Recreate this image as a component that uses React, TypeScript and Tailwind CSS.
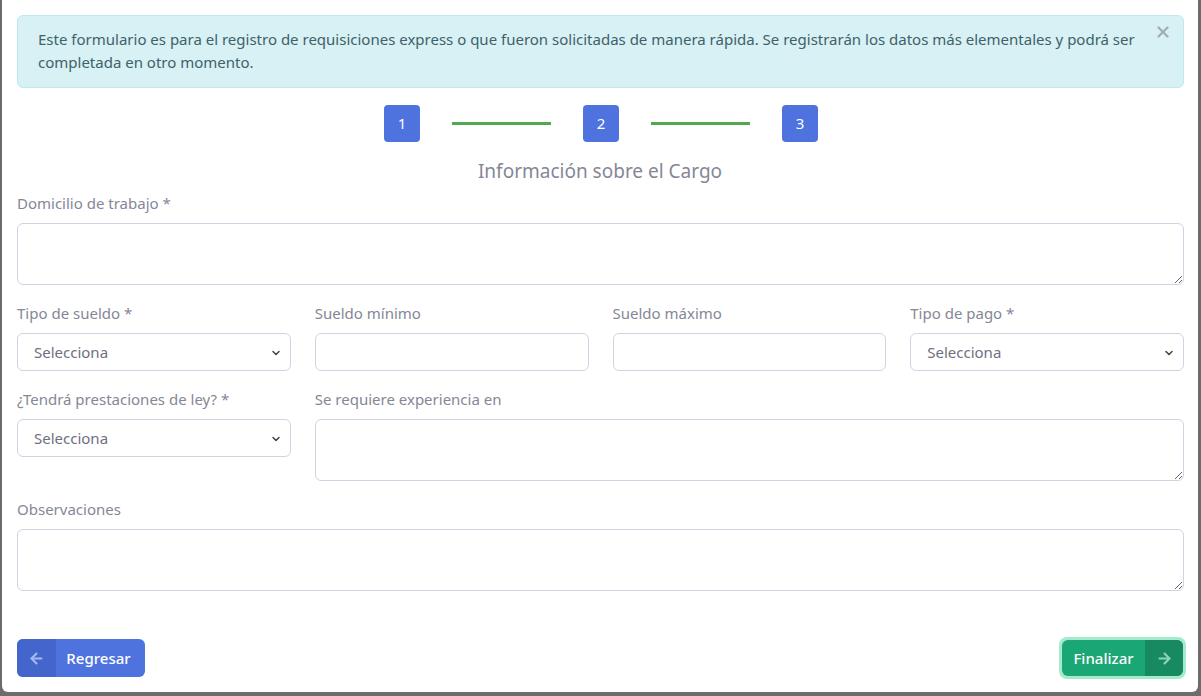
import React from 'react';
import { ArrowLeft, ArrowRight, X, ChevronDown } from 'lucide-react';

const FONT = { fontFamily: '"Noto Sans", "Open Sans", sans-serif' };

function Label({ children }: { children: React.ReactNode }) {
  return <label className="block text-[15px] leading-6 text-[#858796] mb-2">{children}</label>;
}

function Select() {
  return (
    <div className="relative">
      <select className="appearance-none w-full h-[38px] rounded-md border border-[#d1d3e2] bg-white pl-4 pr-8 text-[15px] text-[#6e707e] outline-none">
        <option>Selecciona</option>
      </select>
      <ChevronDown className="absolute right-[9px] top-[14px] w-[12px] h-[12px] text-[#444] pointer-events-none" strokeWidth={3} />
    </div>
  );
}

function Input() {
  return <input className="w-full h-[38px] rounded-md border border-[#d1d3e2] bg-white px-4 text-[15px] outline-none" />;
}

function TextArea() {
  return <textarea className="block w-full h-[62px] rounded-md border border-[#d1d3e2] bg-white px-4 py-2 text-[15px] outline-none" />;
}

function Step({ n }: { n: number }) {
  return (
    <div className="w-[36px] h-[37px] rounded bg-[#4e73df] text-white text-[15px] flex items-center justify-center">
      {n}
    </div>
  );
}

export default function App() {
  return (
    <div className="h-[696px] w-[1201px] bg-[#6c6c6c] overflow-hidden" style={FONT}>
      <div className="ml-[2px] w-[1196px] h-[692px] bg-white rounded-b-md px-[15px] pt-[15px]">
        {/* alert */}
        <div className="relative w-[1167px] border border-[#bee9ef] bg-[#d7f1f5] rounded-md pl-5 pr-10 pt-3 pb-[13px] text-[15px] leading-[23px] text-[#3f6169]">
          Este formulario es para el registro de requisiciones express o que fueron solicitadas de manera rápida. Se registrarán los datos más elementales y podrá ser completada en otro momento.
          <X className="absolute right-[11px] top-[7px] w-[18px] h-[18px] text-[#a3aeb0]" strokeWidth={3} />
        </div>

        {/* stepper */}
        <div className="mt-[17px] flex items-center justify-center gap-8 pl-[2px]">
          <Step n={1} />
          <div className="w-[99px] h-[3px] bg-[#52a84f]" />
          <Step n={2} />
          <div className="w-[99px] h-[3px] bg-[#52a84f]" />
          <Step n={3} />
        </div>

        <h2 className="mt-[15px] text-center text-[19px] leading-7 text-[#858796]">Información sobre el Cargo</h2>

        <div className="w-[1167px] mt-[6px]">
          <Label>Domicilio de trabajo *</Label>
          <TextArea />

          <div className="grid grid-cols-4 gap-x-6 mt-4">
            <div>
              <Label>Tipo de sueldo *</Label>
              <Select />
            </div>
            <div>
              <Label>Sueldo mínimo</Label>
              <Input />
            </div>
            <div>
              <Label>Sueldo máximo</Label>
              <Input />
            </div>
            <div>
              <Label>Tipo de pago *</Label>
              <Select />
            </div>
          </div>

          <div className="grid grid-cols-4 gap-x-6 mt-4">
            <div>
              <Label>¿Tendrá prestaciones de ley? *</Label>
              <Select />
            </div>
            <div className="col-span-3">
              <Label>Se requiere experiencia en</Label>
              <TextArea />
            </div>
          </div>

          <div className="mt-4">
            <Label>Observaciones</Label>
            <TextArea />
          </div>

          <div className="mt-[46px] flex items-center justify-between">
            <button className="flex h-[38px] w-[128px] rounded-md overflow-hidden bg-[#4e73df] text-white text-[15px] font-medium">
              <span className="w-[39px] h-full bg-[#4465cb] flex items-center justify-center">
                <ArrowLeft className="w-[17px] h-[17px] text-[#a6b8ef]" strokeWidth={3} />
              </span>
              <span className="flex-1 flex items-center justify-center pr-1">Regresar</span>
            </button>
            <button className="flex h-[42px] w-[127px] rounded-lg p-[3px] bg-[#a4ebcd] mr-[-2px]">
              <span className="flex w-full h-full rounded-md overflow-hidden bg-[#1ba676] text-white text-[15px] font-medium">
                <span className="flex-1 flex items-center justify-center">Finalizar</span>
                <span className="w-[38px] h-full bg-[#188a62] flex items-center justify-center">
                  <ArrowRight className="w-[17px] h-[17px] text-[#8fd5b5]" strokeWidth={3} />
                </span>
              </span>
            </button>
          </div>
        </div>
      </div>
    </div>
  );
}
